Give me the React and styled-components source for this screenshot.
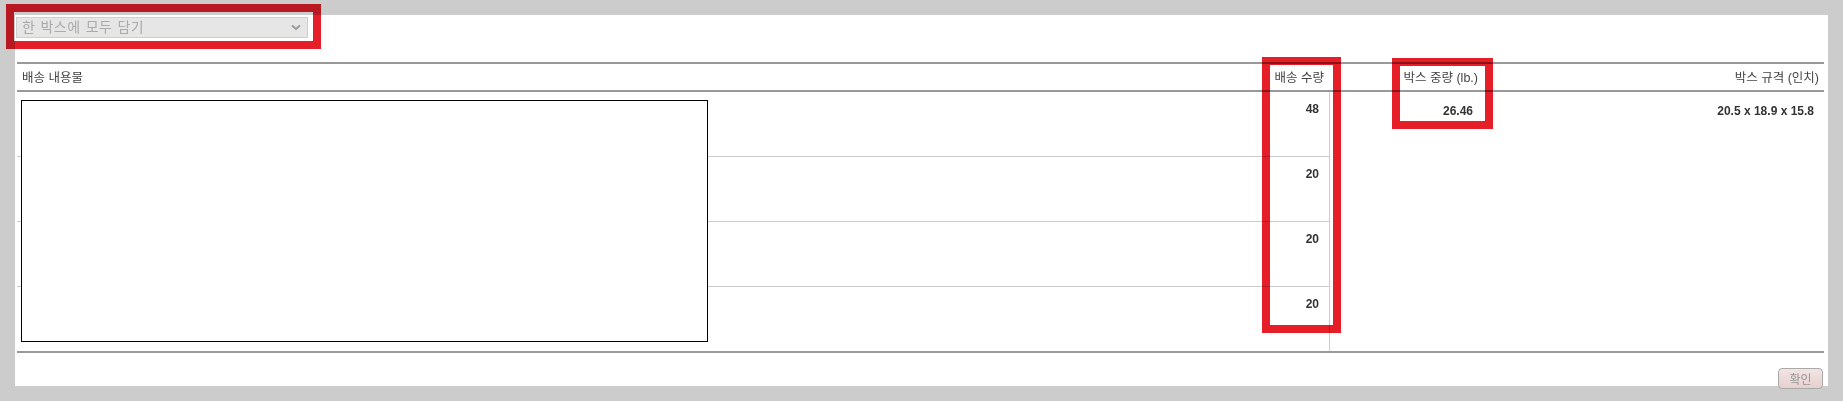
import styled, { createGlobalStyle } from 'styled-components';

const GlobalStyle = createGlobalStyle`
    html, body {
        margin: 0;
        padding: 0;
        background: #cccccc;
    }
    body {
        font-family: "Liberation Sans", "Noto Sans CJK KR", Arial, sans-serif;
        color: #333;
    }
    * {
        box-sizing: border-box;
    }
`

const Page = styled.div`
    position: relative;
    width: 1843px;
    height: 401px;
    padding: 15px;
    overflow: hidden;
`

const Panel = styled.div`
    background: #fff;
    height: 371px;
`

const SelectRow = styled.div`
    padding: 2px 0 0 1px;
`

const SelectBox = styled.div`
    display: flex;
    align-items: center;
    justify-content: space-between;
    width: 292px;
    height: 21px;
    padding: 0 6px 0 5px;
    background: #e6e6e6;
    border: 1px solid #cfcfcf;
    color: #aaa;
    font-size: 14px;
    letter-spacing: 0.4px;
    word-spacing: 1px;
    line-height: 19px;
`

const Table = styled.div`
    margin: 24px 4px 0 2px;
    border-top: 2px solid #999;
    border-bottom: 2px solid #999;
`

const Grid = styled.div`
    display: grid;
    grid-template-columns: 1fr 71px 153px 341px;
`

const Head = styled(Grid)`
    height: 28px;
    border-bottom: 2px solid #999;
`

const HeadCell = styled.div`
    padding: 2px ${p => (p.$pad ? p.$pad : 5)}px 0 5px;
    line-height: 24px;
    font-size: 12.5px;
    color: #444;
    text-align: ${p => (p.$left ? 'left' : 'right')};
    white-space: nowrap;
`

const Body = styled(Grid)`
    grid-template-rows: 65px 65px 65px 64px;
`

const ContentCell = styled.div`
    grid-column: 1;
    border-bottom: ${p => (p.$last ? 'none' : '1px solid #ccc')};
`

const QtyCell = styled.div`
    grid-column: 2;
    padding: 10px 10px 0 0;
    line-height: 14px;
    font-size: 12px;
    font-weight: 700;
    text-align: right;
    border-right: 1px solid #ccc;
    border-bottom: ${p => (p.$last ? 'none' : '1px solid #ccc')};
`

const SpanCell = styled.div`
    grid-column: ${p => p.$col};
    grid-row: 1 / -1;
    padding: 12px 10px 0 0;
    line-height: 14px;
    font-size: 12px;
    font-weight: 700;
    text-align: right;
`

const Preview = styled.div`
    position: relative;
    z-index: 1;
    margin: 8px 0 0 4px;
    width: 687px;
    height: 242px;
    background: #fff;
    border: 1px solid #000;
`

const Footer = styled.div`
    display: flex;
    justify-content: flex-end;
    padding: 15px 5px 0 0;
`

const ConfirmButton = styled.button`
    width: 45px;
    height: 21px;
    padding: 0;
    border: 1px solid #a9a9a9;
    border-radius: 4px;
    background: linear-gradient(#f3e4e4, #e6d0d0);
    color: #999;
    font-size: 12px;
    line-height: 19px;
    font-family: "Noto Sans CJK KR", sans-serif;
`

const Highlight = styled.div`
    position: absolute;
    left: ${p => p.$x}px;
    top: ${p => p.$y}px;
    width: ${p => p.$w}px;
    height: ${p => p.$h}px;
    border: 8px solid #e61e28;
    mix-blend-mode: multiply;
    pointer-events: none;
`

const rows = [48, 20, 20, 20];

function Chevron() {
    return (
        <svg width="10" height="7" viewBox="0 0 10 7">
            <path d="M1 1.5 L5 5 L9 1.5" fill="none" stroke="#999" strokeWidth="2" />
        </svg>
    );
}

export default function App() {
    return (
        <>
            <GlobalStyle />
            <Page>
                <Panel>
                    <SelectRow>
                        <SelectBox>
                            <span>한 박스에 모두 담기</span>
                            <Chevron />
                        </SelectBox>
                    </SelectRow>
                    <Table>
                        <Head>
                            <HeadCell $left>배송 내용물</HeadCell>
                            <HeadCell $pad={6}>배송 수량</HeadCell>
                            <HeadCell>박스 중량 (lb.)</HeadCell>
                            <HeadCell>박스 규격 (인치)</HeadCell>
                        </Head>
                        <Body>
                            {rows.map((qty, i) => (
                                <ContentCell key={'c' + i} style={{ gridRow: i + 1 }} $last={i === rows.length - 1}>
                                    {i === 0 && <Preview />}
                                </ContentCell>
                            ))}
                            {rows.map((qty, i) => (
                                <QtyCell key={'q' + i} style={{ gridRow: i + 1 }} $last={i === rows.length - 1}>
                                    {qty}
                                </QtyCell>
                            ))}
                            <SpanCell $col={3}>26.46</SpanCell>
                            <SpanCell $col={4}>20.5 x 18.9 x 15.8</SpanCell>
                        </Body>
                    </Table>
                    <Footer>
                        <ConfirmButton>확인</ConfirmButton>
                    </Footer>
                </Panel>
                <Highlight $x={6} $y={4} $w={315} $h={45} />
                <Highlight $x={1262} $y={57} $w={79} $h={276} />
                <Highlight $x={1392} $y={58} $w={101} $h={71} />
            </Page>
        </>
    );
}
